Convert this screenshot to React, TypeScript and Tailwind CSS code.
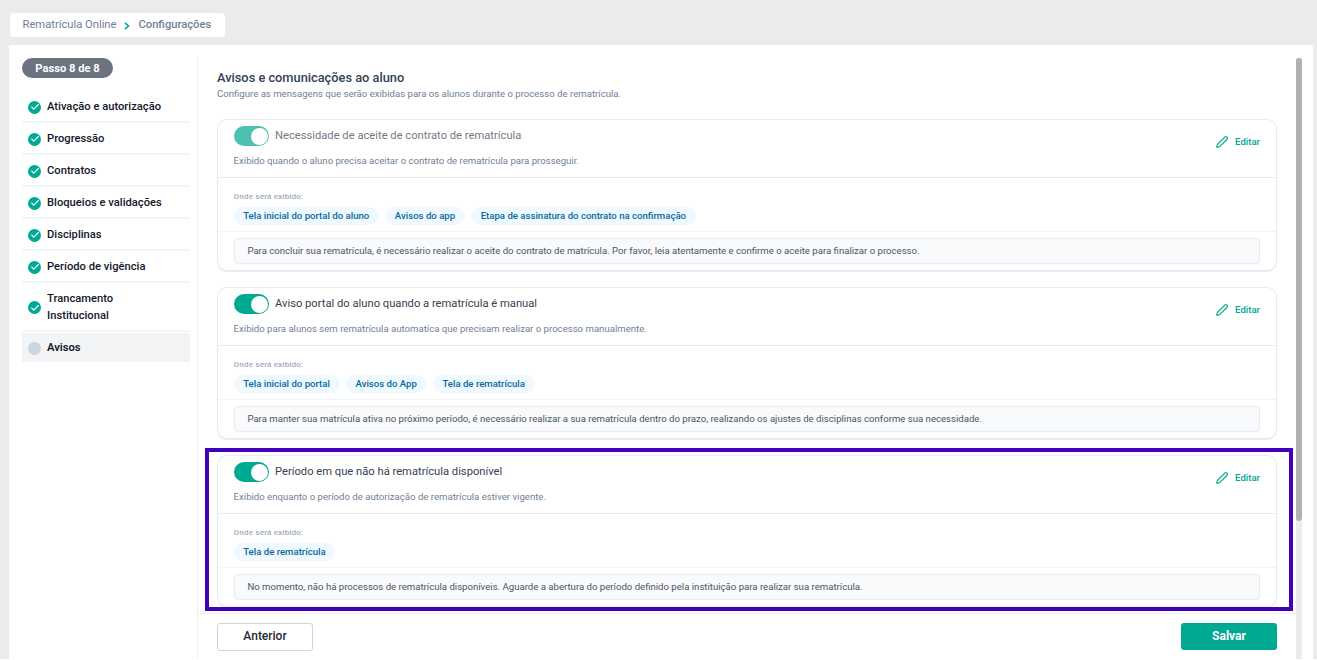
import { Check } from "lucide-react";

const steps = [
  "Ativação e autorização",
  "Progressão",
  "Contratos",
  "Bloqueios e validações",
  "Disciplinas",
  "Período de vigência",
  "Trancamento Institucional",
];

const notices = [
  {
    title: "Necessidade de aceite de contrato de rematrícula",
    description: "Exibido quando o aluno precisa aceitar o contrato de rematrícula para prosseguir.",
    places: ["Tela inicial do portal do aluno", "Avisos do app", "Etapa de assinatura do contrato na confirmação"],
    message:
      "Para concluir sua rematrícula, é necessário realizar o aceite do contrato de matrícula. Por favor, leia atentamente e confirme o aceite para finalizar o processo.",
    locked: true,
  },
  {
    title: "Aviso portal do aluno quando a rematrícula é manual",
    description: "Exibido para alunos sem rematrícula automatíca que precisam realizar o processo manualmente.",
    places: ["Tela inicial do portal", "Avisos do App", "Tela de rematrícula"],
    message:
      "Para manter sua matrícula ativa no próximo período, é necessário realizar a sua rematrícula dentro do prazo, realizando os ajustes de disciplinas conforme sua necessidade.",
    locked: false,
  },
  {
    title: "Período em que não há rematrícula disponível",
    description: "Exibido enquanto o período de autorização de rematrícula estiver vigente.",
    places: ["Tela de rematrícula"],
    message:
      "No momento, não há processos de rematrícula disponíveis. Aguarde a abertura do período definido pela instituição para realizar sua rematrícula.",
    locked: false,
  },
];

type Notice = (typeof notices)[number];

function Breadcrumb() {
  return (
    <nav className="ml-[10px] mt-[13px] flex h-6 w-[215px] shrink-0 items-center rounded bg-white pl-[12.5px] text-[11.2px] text-[#718096]">
      <span>Rematrícula Online</span>
      <svg className="mx-2 mt-px h-2 w-[6px]" viewBox="0 0 6 8" fill="none" stroke="#00a991" strokeWidth="1.6">
        <path d="M1 0.8 4.5 4 1 7.2" />
      </svg>
      <span className="font-medium">Configurações</span>
    </nav>
  );
}

function Sidebar() {
  return (
    <aside className="mt-[13px] w-[189px] shrink-0 border-r border-[#edeff3] pl-[13px] text-[11.2px] font-medium text-[#12172a]">
      <div className="flex h-[20px] w-[91px] items-center justify-center rounded-full bg-[#6b7280] pt-[2px] font-bold text-white">
        Passo 8 de 8
      </div>
      <ul className="mt-[13px] w-[168px]">
        {steps.map((step) => (
          <li key={step} className="flex min-h-8 items-center border-b-2 border-[#f3f4f6] pb-[6px] pl-[6px] pt-[7px]">
            <span className="mt-px flex h-[13px] w-[13px] items-center justify-center rounded-full bg-[#00a991]">
              <Check className="h-[10px] w-[10px] text-white" strokeWidth={2.6} />
            </span>
            <span className="ml-[6px] w-[125px] leading-[17px]">{step}</span>
          </li>
        ))}
        <li className="mt-px flex h-[29px] items-center bg-[#f3f4f6] pl-[6px]">
          <span className="mt-px h-[13px] w-[13px] rounded-full bg-[#cbd5e1]" />
          <span className="ml-[6px] pt-px font-semibold">Avisos</span>
        </li>
      </ul>
    </aside>
  );
}

function Toggle() {
  return (
    <span className="flex h-5 w-[35px] items-center justify-end rounded-full bg-[#00a991] pr-px">
      <span className="h-[17px] w-[17px] rounded-full bg-white" />
    </span>
  );
}

function NoticeCard({ title, description, places, message, locked }: Notice) {
  return (
    <section className="h-[153px] rounded-[10px] border border-b-2 border-[#e8ebf2]">
      <div className="flex h-[58px] justify-between border-b border-[#e8ebf2] pl-[15.6px] pr-4">
        <div>
          <div className={`mt-[6px] flex h-5 items-center ${locked ? "opacity-70" : ""}`}>
            <Toggle />
            <h2 className="ml-[6.4px] text-[11.2px] leading-[18px] text-[#374151]">{title}</h2>
          </div>
          <p className="mt-[8px] text-[9.6px] leading-[14px] text-[#718096]">{description}</p>
        </div>
        <button className="mt-[14px] flex h-4 items-center text-[9.6px] font-medium text-[#00a991]">
          <svg className="mr-[7px] h-3 w-3" viewBox="0 0 12 12" fill="none" stroke="currentColor" strokeWidth="1.15" strokeLinejoin="round">
            <path d="M.7 11.3 1.3 8.5 8.5 1.3Q9.8.1 11 1.1 12 2.2 10.8 3.5L3.6 10.6Z" />
          </svg>
          Editar
        </button>
      </div>
      <div className="h-[54px] border-b border-[#f3f4f6] pl-[15.6px] pt-[13px]">
        <p className="text-[8px] font-medium leading-[12px] tracking-[0.2px] text-[#a0a9bd]">Onde será exibido:</p>
        <div className="mt-[4px] flex gap-[6.4px]">
          {places.map((place) => (
            <span key={place} className="flex h-[18px] items-center rounded-full bg-[#f0f9ff] px-[9.6px] text-[9.6px] font-medium text-[#0369a1]">
              {place}
            </span>
          ))}
        </div>
      </div>
      <p className="ml-[15.6px] mr-4 mt-[6px] flex h-[26px] items-center rounded border border-[#e8ebf2] bg-[#f9fafb] pl-[12.8px] text-[9.6px] text-[#4b5563]">
        {message}
      </p>
    </section>
  );
}

function ScrollBar() {
  return (
    <div className="ml-[19px] mt-[13px] w-[6px] shrink-0 bg-[#ebebeb]">
      <div className="h-[463px] rounded-[3px] bg-[#b1b1b1]" />
    </div>
  );
}

export default function App() {
  return (
    <div className="flex h-[659px] w-[1317px] flex-col overflow-hidden bg-[#ebebeb] font-['Roboto',sans-serif]">
      <Breadcrumb />
      <div className="ml-[9px] mt-[8px] flex min-h-0 w-[1304px] flex-1 rounded-t-[2px] bg-white">
        <Sidebar />
        <main className="relative ml-[19px] flex w-[1060px] shrink-0 flex-col">
          <header className="mt-[24px] h-[50px]">
            <h1 className="text-[12.8px] font-medium leading-[18px] text-[#334155]">Avisos e comunicações ao aluno</h1>
            <p className="text-[9.6px] leading-[14px] text-[#718096]">
              Configure as mensagens que serão exibidas para os alunos durante o processo de rematrícula.
            </p>
          </header>
          <div className="flex flex-col gap-[15px]">
            {notices.map((notice) => (
              <NoticeCard key={notice.title} {...notice} />
            ))}
          </div>
          {/* highlight over the last notice */}
          <div className="absolute -left-[12.5px] top-[403px] h-[163px] w-[1088.5px] border-4 border-[#4200b8]" />
          <footer className="-mx-[19px] mt-[5px] flex items-start justify-between border-t border-[#edeff3] px-[19px] pt-[9px] text-[12px] font-medium">
            <button className="h-[28px] w-24 rounded-[3px] border border-[#cbd5e1] pb-[2px] text-[#1f2937]">Anterior</button>
            <button className="h-[27px] w-24 rounded-[3px] bg-[#00a991] pb-[2px] font-bold text-white">Salvar</button>
          </footer>
        </main>
        <ScrollBar />
      </div>
    </div>
  );
}
